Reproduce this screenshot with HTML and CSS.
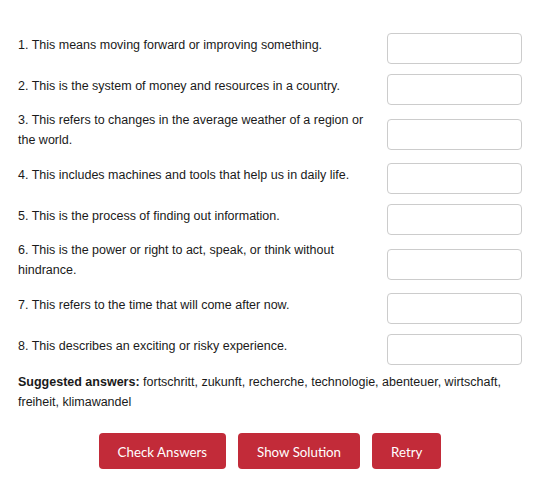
FILE: index.html
```html
<!DOCTYPE html>
<html lang="en">
<head>
<meta charset="utf-8">
<title>Vocabulary Quiz</title>
<link rel="stylesheet" href="styles.css">
</head>
<body>
<div class="quiz">
  <div class="questions">
    <div class="row"><label class="q" for="a1">1. This means moving forward or improving something.</label><input class="answer" id="a1" type="text"></div>
    <div class="row"><label class="q" for="a2">2. This is the system of money and resources in a country.</label><input class="answer" id="a2" type="text"></div>
    <div class="row"><label class="q" for="a3">3. This refers to changes in the average weather of a region or the world.</label><input class="answer" id="a3" type="text"></div>
    <div class="row"><label class="q" for="a4">4. This includes machines and tools that help us in daily life.</label><input class="answer" id="a4" type="text"></div>
    <div class="row"><label class="q" for="a5">5. This is the process of finding out information.</label><input class="answer" id="a5" type="text"></div>
    <div class="row"><label class="q" for="a6">6. This is the power or right to act, speak, or think without hindrance.</label><input class="answer" id="a6" type="text"></div>
    <div class="row"><label class="q" for="a7">7. This refers to the time that will come after now.</label><input class="answer" id="a7" type="text"></div>
    <div class="row"><label class="q" for="a8">8. This describes an exciting or risky experience.</label><input class="answer" id="a8" type="text"></div>
  </div>
  <p class="suggest"><strong>Suggested answers:</strong> fortschritt, zukunft, recherche, technologie, abenteuer, wirtschaft, freiheit, klimawandel</p>
  <div class="actions">
    <button class="btn" type="button">Check Answers</button>
    <button class="btn" type="button">Show Solution</button>
    <button class="btn" type="button">Retry</button>
  </div>
</div>
</body>
</html>
```
FILE: styles.css
```css
html, body {
  margin: 0;
  background: #ffffff;
}
body {
  font-family: "Liberation Sans", Arial, sans-serif;
  font-size: 12.5px;
  color: #1a1a1a;
}
.quiz {
  padding: 33px 18px 0 18px;
}
.questions {
  display: flex;
  flex-direction: column;
  gap: 10px;
}
.row {
  display: flex;
  align-items: center;
  justify-content: space-between;
}
.q {
  flex: 1;
  line-height: 20px;
  margin: -5px 12px 3px 0;
}
.answer {
  width: 135px;
  height: 31px;
  box-sizing: border-box;
  border: 1px solid #cccccc;
  border-radius: 4px;
  background: #ffffff;
  font-size: 13px;
  padding: 6px 8px;
}
.suggest {
  margin: 7px 0 0 0;
  line-height: 20px;
}
.actions {
  display: flex;
  justify-content: center;
  gap: 12px;
  margin-top: 21px;
}
.btn {
  height: 36px;
  padding: 1px 19px 0 19px;
  background: #c22b39;
  color: #ffffff;
  border: 0;
  border-radius: 4px;
  font-family: Lato, "Open Sans", sans-serif;
  font-size: 13.3px;
  cursor: pointer;
}
```
